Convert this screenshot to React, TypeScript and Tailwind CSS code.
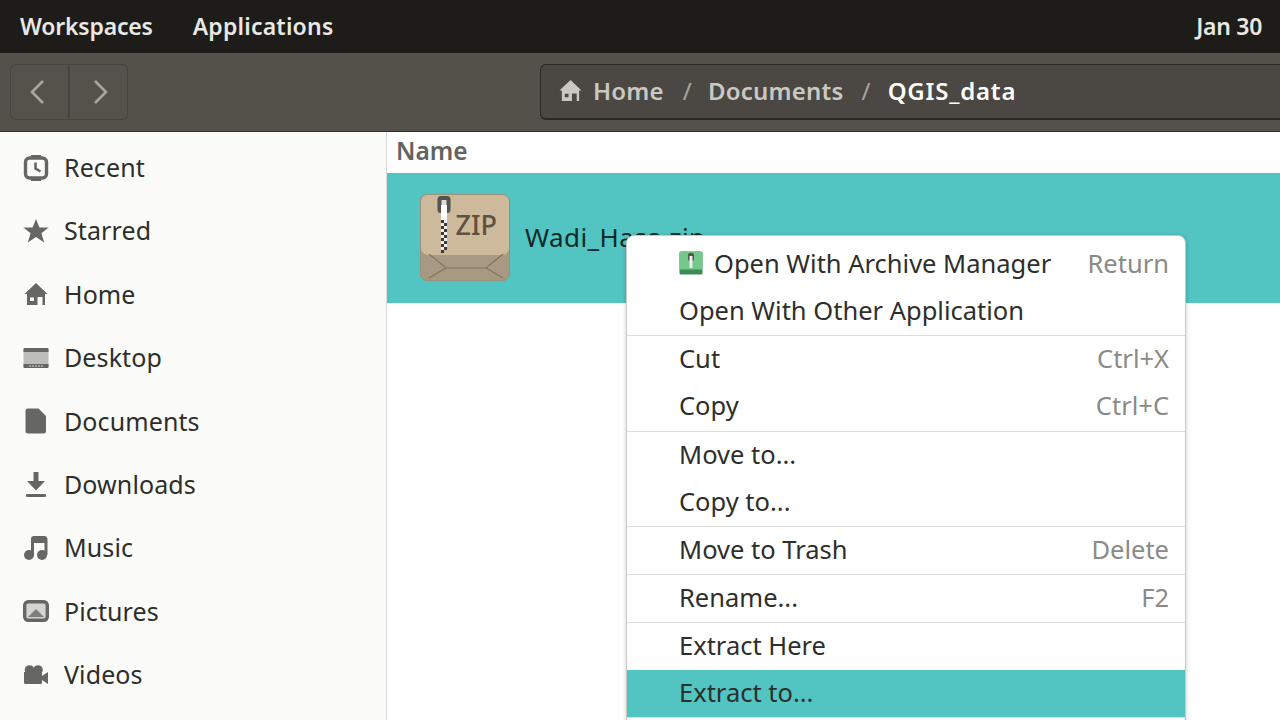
import React from "react";

const FONT = "font-['Noto_Sans','Open_Sans',sans-serif]";

function Recent() {
  return (
    <svg width="26" height="28" viewBox="0 0 26 28">
      <path d="M8 1h10v3H8zM8 24h10v3H8z" fill="#666663" />
      <rect x="2.500" y="4" width="21" height="20" rx="4" fill="none" stroke="#666663" strokeWidth="3.400" />
      <path d="M12.500 8.500v6l5 3" fill="none" stroke="#666663" strokeWidth="2.600" />
    </svg>
  );
}
function Star() {
  return (
    <svg width="28" height="28" viewBox="0 0 28 28">
      <path d="M14 1l3.700 9.300h10L19.800 16.500l3 10L14 20.500 5.200 26.500l3-10L.3 10.300h10z" fill="#666663" />
    </svg>
  );
}
function HomeIcon({ color = "#666663", size = 24 }: { color?: string; size?: number }) {
  return (
    <svg width={size} height={size} viewBox="0 0 24 24">
      <path fillRule="evenodd" d="M12 1L23.500 12H21V23H18.500V15H13.500V23H3V12H.5zM6 15.500v3.500h4v-3.500z" fill={color} />
    </svg>
  );
}
function Desktop() {
  return (
    <svg width="26" height="22" viewBox="0 0 26 22">
      <rect x="0.500" y="1" width="25" height="20" rx="1" fill="#bdbdb9" />
      <path d="M1.500 1h23a1 1 0 0 1 1 1v3H.5V2a1 1 0 0 1 1-1zM.5 17h25v3a1 1 0 0 1-1 1h-23a1 1 0 0 1-1-1z" fill="#666663" />
      <path d="M6 18.500h2v1H6zM9 18.500h2v1H9zM12 18.500h2v1h-2zM15 18.500h2v1h-2zM18 18.500h2v1h-2z" fill="#ddd" />
    </svg>
  );
}
function Doc() {
  return (
    <svg width="22" height="26" viewBox="0 0 22 26">
      <path d="M3 .5h10.500L21 8v15a2.500 2.500 0 0 1-2.500 2.500H3A2.500 2.500 0 0 1 .5 23V3A2.500 2.500 0 0 1 3 .5z" fill="#666663" />
    </svg>
  );
}
function Download() {
  return (
    <svg width="22" height="28" viewBox="0 0 22 28">
      <path d="M8.500 1h5v9H20L11 19.500 2 10h6.500z" fill="#666663" />
      <rect x="1" y="23" width="20" height="3" rx="1" fill="#666663" />
    </svg>
  );
}
function Music() {
  return (
    <svg width="26" height="26" viewBox="0 0 26 26">
      <circle cx="6" cy="20" r="5" fill="#666663" />
      <circle cx="19" cy="20" r="5" fill="#666663" />
      <path d="M8 20V4a3 3 0 0 1 3-3h11a3 3 0 0 1 2.500 3v16h-3V8H11v12z" fill="#666663" />
    </svg>
  );
}
function Pictures() {
  return (
    <svg width="26" height="22" viewBox="0 0 26 22">
      <rect x="1.700" y="1.700" width="22.600" height="18.600" rx="3.500" fill="#d4d4d0" stroke="#666663" strokeWidth="3.400" />
      <path d="M5 17l8-8 8 8z" fill="#7d7d79" />
    </svg>
  );
}
function Videos() {
  return (
    <svg width="24" height="19" viewBox="0 0 24 19">
      <circle cx="5.500" cy="5" r="4.800" fill="#666663" />
      <circle cx="14" cy="5" r="4.800" fill="#666663" />
      <path d="M0 7h18v10.500a1.500 1.500 0 0 1-1.500 1.500h-15A1.500 1.500 0 0 1 0 17.500zM18 11l6-4v12l-6-4z" fill="#666663" />
    </svg>
  );
}

function ZipIcon() {
  return (
    <div className="relative w-[90px] h-[87px] rounded-[7px] bg-[#a89a82] border border-[#9c9079] overflow-hidden">
      <svg className="absolute left-0 bottom-0" width="90" height="26" viewBox="0 0 90 26">
        <path d="M8 0l17 14h40L82 0M25 14L8 24M65 14l17 10" fill="none" stroke="#7f745f" strokeWidth="1.200" />
      </svg>
      <div className="h-[60px] bg-[#cdb99c] rounded-b-[7px] flex items-center justify-end pr-[12px] pb-[1px]">
        <span className={`${FONT} text-[27px] font-medium leading-none text-[#5f513f]`}>ZIP</span>
      </div>
      <svg className="absolute left-[16px] top-0" width="14" height="60" viewBox="0 0 14 60">
        <rect x="0.500" y="1" width="13" height="17" rx="3.500" fill="#55534f" />
        <rect x="4.500" y="5" width="5" height="13" fill="#ddd" />
        <rect x="4" y="10" width="6" height="15" fill="#fff" />
        <path d="M4 25h3v3H4zM7 28h3v3H7zM4 31h3v3H4zM7 34h3v3H7zM4 37h3v3H4zM7 40h3v3H7zM4 43h3v3H4zM7 46h3v3H7zM4 49h3v3H4zM7 52h3v3H7zM4 55h3v3H4z" fill="#3c3a36" />
        <path d="M7 25h3v3H7zM4 28h3v3H4zM7 31h3v3H7zM4 34h3v3H4zM7 37h3v3H7zM4 40h3v3H4zM7 43h3v3H7zM4 46h3v3H4zM7 49h3v3H7zM4 52h3v3H4z" fill="#eee" />
      </svg>
    </div>
  );
}

function ArchiveIcon() {
  return (
    <svg width="24" height="24" viewBox="0 0 24 24">
      <rect x="0.500" y="0.500" width="23" height="23" rx="1.500" fill="#3f8a56" />
      <rect x="0.500" y="0.500" width="23" height="18" rx="1.500" fill="#74c98a" />
      <rect x="9" y="2" width="6" height="8" rx="2" fill="#55534f" />
      <rect x="10.500" y="5" width="3" height="12" fill="#eee" />
    </svg>
  );
}

const places: [string, React.ReactNode][] = [
  ["Recent", <Recent />],
  ["Starred", <Star />],
  ["Home", <HomeIcon />],
  ["Desktop", <Desktop />],
  ["Documents", <Doc />],
  ["Downloads", <Download />],
  ["Music", <Music />],
  ["Pictures", <Pictures />],
  ["Videos", <Videos />],
];

function MenuItem({ label, hint, icon, active }: { label: string; hint?: string; icon?: boolean; active?: boolean }) {
  return (
    <div className={`h-[47.15px] flex items-center justify-between pl-[52px] pr-[16px] pb-[3px] ${active ? "bg-[#52c4c1]" : ""}`}>
      <span className="flex items-center gap-[11px] text-[#2e2e2b]">
        {icon && <ArchiveIcon />}
        {label}
      </span>
      {hint && <span className="text-[#8a8a86]">{hint}</span>}
    </div>
  );
}

function Sep() {
  return <div className="h-px bg-[#dededa]" />;
}

export default function App() {
  return (
    <div className={`${FONT} w-[1280px] h-[720px] overflow-hidden flex flex-col bg-white`}>
      {/* top bar */}
      <div className="h-[53px] shrink-0 bg-[#1d1c19] flex items-center justify-between pl-[20px] pr-[18px] text-[23px] font-semibold text-[#e8e8e4]">
        <div className="flex gap-[40px]">
          <span className="tracking-[-0.2px]">Workspaces</span>
          <span className="tracking-[0.2px]">Applications</span>
        </div>
        <span className="tracking-[-0.3px]">Jan 30</span>
      </div>

      {/* header bar */}
      <div className="h-[79px] shrink-0 bg-[#54504a] border-b border-[#35332f] flex items-center pl-[10px]">
        <div className="w-[118px] h-[56px] flex rounded-[6px] border border-[#47443f] bg-[#55514b]">
          <div className="w-[59px] flex items-center justify-center pr-[5px] border-r-2 border-[#47443f]">
            <svg width="16" height="26" viewBox="0 0 16 26"><path d="M14 2L3 13l11 11" fill="none" stroke="#a8a69f" strokeWidth="2.600" /></svg>
          </div>
          <div className="flex-1 flex items-center justify-center pl-[4px]">
            <svg width="16" height="26" viewBox="0 0 16 26"><path d="M2 2l11 11L2 24" fill="none" stroke="#a8a69f" strokeWidth="2.600" /></svg>
          </div>
        </div>
        <div className="ml-[412px] flex-1 h-[56px] pb-[2px] rounded-l-[6px] border border-r-0 border-[#2b2a27] border-b-2 bg-[#4b4843] flex items-center pl-[18px] text-[24px] font-semibold tracking-[0.2px] text-[#c9c8c3]">
          <HomeIcon color="#c9c8c3" size={23} />
          <span className="ml-[11px]">Home</span>
          <span className="ml-[19px] font-normal text-[#a8a69f]">/</span>
          <span className="ml-[16px]">Documents</span>
          <span className="ml-[18px] font-normal text-[#a8a69f]">/</span>
          <span className="ml-[17px] tracking-[0.8px] text-white">QGIS_data</span>
        </div>
      </div>

      {/* body */}
      <div className="flex-1 flex min-h-0">
        <div className="w-[387px] shrink-0 bg-[#fbfbf9] border-r border-[#d9d9d5] pt-[4px] text-[25px] tracking-[0.1px] text-[#2e2e2b]">
          {places.map(([name, icon]) => (
            <div key={name} className="h-[63.4px] flex items-center">
              <div className="w-[64px] pl-[23px] pr-[15px] flex items-center justify-center shrink-0">{icon}</div>
              <span>{name}</span>
            </div>
          ))}
        </div>

        <div className="relative flex-1 bg-white">
          <div className="h-[41px] flex items-center pl-[9px] pb-[3px] text-[24.500px] font-semibold text-[#63635f]">Name</div>
          <div className="h-[130px] bg-[#52c4c1] flex items-center pl-[33px] pb-[1px]">
            <ZipIcon />
            <span className="ml-[15px] text-[26px] tracking-[0.4px] text-[#0f2a2a]">Wadi_Hasa.zip</span>
          </div>

          {/* context menu */}
          <div className="absolute left-[239px] top-[103px] w-[560px] bg-white rounded-t-[8px] border border-[#c9c9c5] pt-[5px] pb-[20px] text-[25.500px] shadow-[0_1px_4px_rgba(0,0,0,0.2)]">
            <MenuItem label="Open With Archive Manager" hint="Return" icon />
            <MenuItem label="Open With Other Application" hint="" />
            <Sep />
            <MenuItem label="Cut" hint="Ctrl+X" />
            <MenuItem label="Copy" hint="Ctrl+C" />
            <Sep />
            <MenuItem label="Move to..." />
            <MenuItem label="Copy to..." />
            <Sep />
            <MenuItem label="Move to Trash" hint="Delete" />
            <Sep />
            <MenuItem label="Rename..." hint="F2" />
            <Sep />
            <MenuItem label="Extract Here" />
            <MenuItem label="Extract to..." active />
            <Sep />
          </div>
        </div>
      </div>
    </div>
  );
}
